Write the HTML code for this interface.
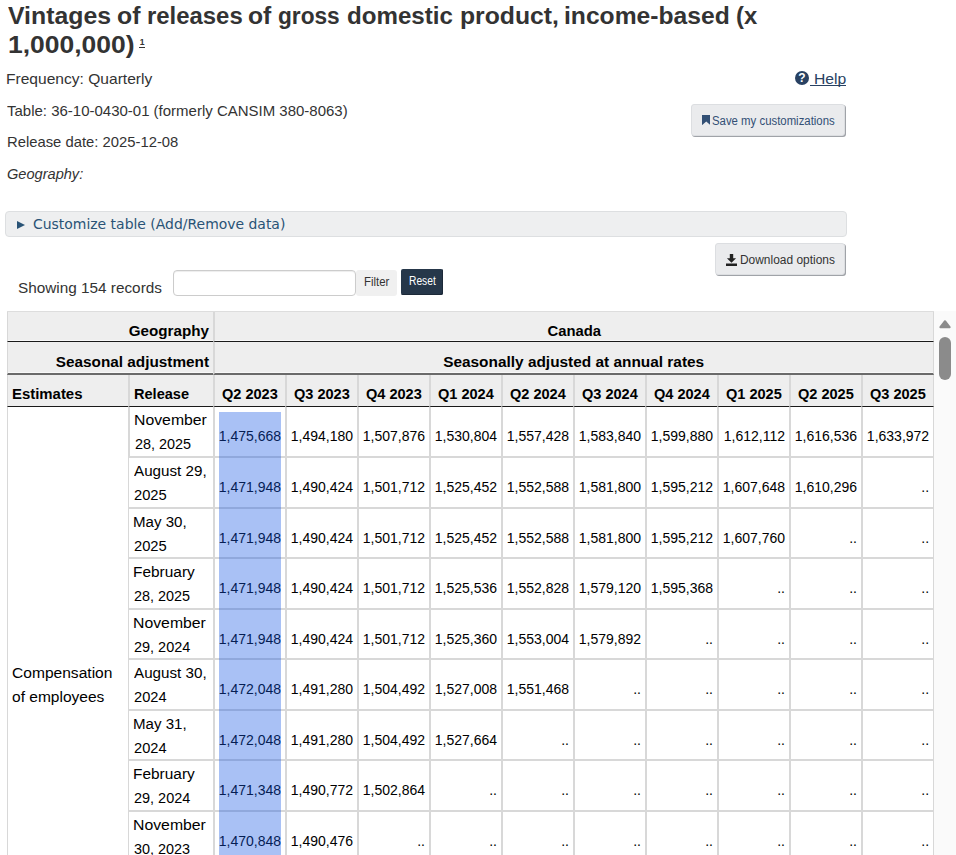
<!DOCTYPE html>
<html lang="en"><head><meta charset="utf-8"><title>Vintages of releases of gross domestic product, income-based</title>
<style>
*{box-sizing:border-box}
html,body{margin:0;padding:0;background:#fff}
body{width:956px;height:855px;overflow:hidden;position:relative;font-family:"Liberation Sans",sans-serif;font-size:15px;color:#333}
h1{margin:0;font-size:24.6px;font-weight:bold}
.tx{position:absolute;margin:0;white-space:nowrap;transform-origin:0 50%;height:20px;line-height:20px;display:block;text-decoration:none;text-align:left}
button{font:inherit;margin:0;padding:0;cursor:pointer;display:block;overflow:visible}
input{font:inherit;margin:0;padding:0 6px;outline:0;display:block}
summary{list-style:none;display:block;cursor:pointer}summary::-webkit-details-marker{display:none}
.fn a{color:inherit;text-decoration:none}
.help{cursor:pointer}
.fn{position:absolute;left:139px;top:36px;font-size:8.5px;line-height:12.400px;font-weight:bold;color:#333;border-bottom:1px solid #333;height:12px;padding:0 .7px}
.helpico{position:absolute;left:795px;top:70.9px;display:block}
.helpul{position:absolute;left:809.5px;top:85px;width:36px;height:1px;background:#284162}
.btn{position:absolute;background:#eaebed;border:1px solid #dcdee1;border-radius:3px;box-shadow:1px 1px .5px #a0a3a8}
.ico{position:absolute;display:block}
.cust{position:absolute;left:5px;top:211px;width:842px;height:26px;background:#eeeff0;border:1px solid #dddfe1;border-radius:4px}
.cust .tri{position:absolute;left:11px;top:8.500px;width:0;height:0;border-left:8px solid #295376;border-top:4.500px solid transparent;border-bottom:4.500px solid transparent}
.inp{position:absolute;left:173px;top:270px;width:183px;height:26px;border:1px solid #ccc;border-radius:4px;background:#fff;box-shadow:inset 0 1px 1px rgba(0,0,0,.075)}
.fbtn{position:absolute;left:356px;top:270px;width:41px;height:26px;background:#f0f0f0;border-radius:3px}
.reset{position:absolute;left:401px;top:269px;width:42px;height:26px;border:0;background:#26374a;border-radius:2px;box-shadow:inset -1px -1px 0 #1c2938}
.tw{position:absolute;left:7px;top:311px;width:927px;height:544px;overflow:hidden}
table.dt{border-collapse:separate;border-spacing:0;table-layout:fixed;width:927px;font-size:14px;color:#000;border-top:1px solid #ddd}
.dt th,.dt td{padding:0;border:0 solid #d8d8d8;border-left-width:2px;border-bottom-width:2px;overflow:hidden;white-space:nowrap;position:relative}
.dt tr>:first-child{border-left-width:1px}
.dt tr>:last-child{border-right-width:1px}
.dt thead th{background:#eee;font-weight:bold;border-bottom:1px solid #1a1a1a;vertical-align:top;line-height:20px}
.dt thead span{display:inline-block}
.dt .h1 th{height:30px;box-shadow:inset 0 -1px 0 #f8f8f8}
.dt .h2 th{height:33px;border-bottom:2px solid #6a6a6a;box-shadow:inset 0 -1px 0 #f8f8f8}
.dt .h3 th{height:32px}
.dt th.r{text-align:right;padding-right:4px}.dt th.r span{transform-origin:100% 50%}
.dt th.c{text-align:center}
.dt th.l{text-align:left;padding-left:3.500px}.dt th.l span{transform-origin:0 50%}
.dt .h1 span{position:relative;top:8.500px}
.dt .h2 span{position:relative;top:9.500px}
.dt .h3 span{position:relative;top:8.500px}
.dt tbody th{font-weight:normal;text-align:left;vertical-align:top;background:#fff}
.dt tbody th .ln{display:block;width:max-content;height:24px;line-height:24px;transform-origin:0 50%;position:relative;left:5.300px;top:.5px}
.dt tbody th.est{vertical-align:middle}
.dt tbody th.est .ln{left:4.500px;top:.5px}
.dt td{text-align:right;vertical-align:top;padding-right:4px}
.dt td span{display:inline-block;line-height:20px;transform-origin:100% 50%;position:relative;top:19.300px}
.selhl{position:absolute;left:212px;top:101px;width:62px;height:460px;background:rgba(17,84,227,.36)}
.sb{position:absolute;left:934px;top:311px;width:22px;height:544px;background:#fafafa}
.sb .arr{position:absolute;left:5px;top:8.500px;display:block}
.sb .thumb{position:absolute;left:5px;top:26px;width:12px;height:43px;border-radius:6px;background:#8b8b8b}

</style></head><body>
<h1><span class="tx" style="left:7.88px;top:5.73px;font-size:24.6px;color:#333;transform:scaleX(1.0091);font-weight:bold">Vintages</span> <span class="tx" style="left:116.73px;top:5.73px;font-size:24.6px;color:#333;transform:scaleX(1.0086);font-weight:bold">of</span> <span class="tx" style="left:146.65px;top:5.73px;font-size:24.6px;color:#333;transform:scaleX(0.9718);font-weight:bold">releases</span> <span class="tx" style="left:248.14px;top:5.73px;font-size:24.6px;color:#333;transform:scaleX(1.0042);font-weight:bold">of</span> <span class="tx" style="left:278.09px;top:5.73px;font-size:24.6px;color:#333;transform:scaleX(0.9214);font-weight:bold">gross</span> <span class="tx" style="left:346.79px;top:5.73px;font-size:24.6px;color:#333;transform:scaleX(0.9801);font-weight:bold">domestic</span> <span class="tx" style="left:459.79px;top:5.73px;font-size:24.6px;color:#333;transform:scaleX(1.0058);font-weight:bold">product,</span> <span class="tx" style="left:563.90px;top:5.73px;font-size:24.6px;color:#333;transform:scaleX(1.0019);font-weight:bold">income-based</span> <span class="tx" style="left:735.93px;top:5.73px;font-size:24.6px;color:#333;transform:scaleX(0.9702);font-weight:bold">(x</span> <span class="tx" style="left:7.91px;top:35.23px;font-size:24.6px;color:#333;transform:scaleX(1.0759);font-weight:bold">1,000,000)</span> <sup class="fn"><a>1</a></sup></h1>
<div class="meta">
<p class="tx" style="left:6.25px;top:68.55px;font-size:15px;color:#333;transform:scaleX(1.0380)">Frequency: Quarterly</p>
<p class="tx" style="left:7.20px;top:100.55px;font-size:15px;color:#333;transform:scaleX(0.9990)">Table: 36-10-0430-01 (formerly CANSIM 380-8063)</p>
<p class="tx" style="left:6.81px;top:131.80px;font-size:15px;color:#333;transform:scaleX(0.9875)">Release date: 2025-12-08</p>
<p class="tx" style="left:6.84px;top:164.05px;font-size:15px;color:#333;transform:scaleX(0.9722);font-style:italic">Geography:</p>
</div>
<div class="tools">
<a class="help"><svg class="helpico" width="14" height="14" viewBox="0 0 14 14"><circle cx="7" cy="7" r="7" fill="#284162"/><text x="7" y="11.300" font-size="12" font-weight="bold" text-anchor="middle" fill="#fff" font-family="Liberation Sans, sans-serif">?</text></svg><span class="tx" style="left:813.54px;top:68.60px;font-size:15px;color:#284162;transform:scaleX(1.0471)">Help</span><i class="helpul"></i></a>
<button type="button" class="btn" style="left:691px;top:104px;width:154px;height:32px"><svg class="ico" style="left:9.5px;top:10px" width="8.5" height="10.200" viewBox="0 0 8.5 10.200"><path d="M0 0h8.5v10.200l-4.250-3.700L0 10.200z" fill="#335075"/></svg><span class="tx" style="left:20.09px;top:5.54px;font-size:12px;color:#335075;transform:scaleX(0.9484)">Save my customizations</span></button>
</div>
<details class="cust"><summary><i class="tri"></i><span class="tx" style="left:27.13px;top:2.36px;font-size:14px;color:#295376;transform:scaleX(0.9959);font-family:'DejaVu Sans',sans-serif">Customize table (Add/Remove data)</span></summary></details>
<button type="button" class="btn" style="left:715px;top:243px;width:130px;height:32px"><svg class="ico" style="left:10px;top:10px" width="11" height="12" viewBox="0 0 11 12"><path d="M3.800 0h3.400v4.200h2.900L5.500 8.800 0.900 4.200h2.900zM0 9.500h11V12H0z" fill="#222"/></svg><span class="tx" style="left:23.75px;top:5.84px;font-size:12px;color:#333;transform:scaleX(0.9945)">Download options</span></button>
<div class="filterbar">
<span class="tx" style="left:17.61px;top:277.60px;font-size:15px;color:#333;transform:scaleX(1.0213)">Showing 154 records</span>
<input type="text" class="inp" aria-label="Filter">
<label class="fbtn"><span class="tx" style="left:8.19px;top:1.84px;font-size:12px;color:#333;transform:scaleX(0.9472)">Filter</span></label>
<button type="button" class="reset"><span class="tx" style="left:7.98px;top:2.34px;font-size:12px;color:#fff;transform:scaleX(0.8533)">Reset</span></button>
</div>
<div class="tw">
<table class="dt"><colgroup><col style="width:121px"><col style="width:85px"><col style="width:72px"><col style="width:72px"><col style="width:72px"><col style="width:72px"><col style="width:72px"><col style="width:72px"><col style="width:72px"><col style="width:72px"><col style="width:72px"><col style="width:73px"></colgroup>
<thead>
<tr class="h1"><th colspan="2" class="r"><span style="transform:scaleX(1.085)">Geography</span></th><th colspan="10" class="c"><span style="transform:scaleX(1.06)">Canada</span></th></tr>
<tr class="h2"><th colspan="2" class="r"><span style="transform:scaleX(1.094)">Seasonal adjustment</span></th><th colspan="10" class="c"><span style="transform:scaleX(1.1)">Seasonally adjusted at annual rates</span></th></tr>
<tr class="h3"><th class="l"><span style="transform:scaleX(1.065)">Estimates</span></th><th class="l"><span style="transform:scaleX(1.04)">Release</span></th><th class="c"><span style="transform:scaleX(1.04)">Q2 2023</span></th><th class="c"><span style="transform:scaleX(1.04)">Q3 2023</span></th><th class="c"><span style="transform:scaleX(1.04)">Q4 2023</span></th><th class="c"><span style="transform:scaleX(1.04)">Q1 2024</span></th><th class="c"><span style="transform:scaleX(1.04)">Q2 2024</span></th><th class="c"><span style="transform:scaleX(1.04)">Q3 2024</span></th><th class="c"><span style="transform:scaleX(1.04)">Q4 2024</span></th><th class="c"><span style="transform:scaleX(1.04)">Q1 2025</span></th><th class="c"><span style="transform:scaleX(1.04)">Q2 2025</span></th><th class="c"><span style="transform:scaleX(1.04)">Q3 2025</span></th></tr>
</thead><tbody>
<tr style="height:51px"><th rowspan="11" class="est"><span class="ln" style="transform:scaleX(1.1125);margin-left:-0.78px">Compensation</span><span class="ln" style="transform:scaleX(1.1092);margin-left:-0.62px">of employees</span></th><th class="rel"><span class="ln" style="transform:scaleX(1.1284);margin-left:-1.26px">November</span><span class="ln" style="transform:scaleX(1.0297);margin-left:-0.72px">28, 2025</span></th><td><span>1,475,668</span></td><td><span>1,494,180</span></td><td><span>1,507,876</span></td><td><span>1,530,804</span></td><td><span>1,557,428</span></td><td><span>1,583,840</span></td><td><span>1,599,880</span></td><td><span>1,612,112</span></td><td><span>1,616,536</span></td><td><span>1,633,972</span></td></tr>
<tr style="height:51px"><th class="rel"><span class="ln" style="transform:scaleX(1.0851);margin-left:0.00px">August 29,</span><span class="ln" style="transform:scaleX(1.0513);margin-left:-0.74px">2025</span></th><td><span>1,471,948</span></td><td><span>1,490,424</span></td><td><span>1,501,712</span></td><td><span>1,525,452</span></td><td><span>1,552,588</span></td><td><span>1,581,800</span></td><td><span>1,595,212</span></td><td><span>1,607,648</span></td><td><span>1,610,296</span></td><td><span>..</span></td></tr>
<tr style="height:50px"><th class="rel"><span class="ln" style="transform:scaleX(1.0769);margin-left:-1.21px">May 30,</span><span class="ln" style="transform:scaleX(1.0513);margin-left:-0.74px">2025</span></th><td><span>1,471,948</span></td><td><span>1,490,424</span></td><td><span>1,501,712</span></td><td><span>1,525,452</span></td><td><span>1,552,588</span></td><td><span>1,581,800</span></td><td><span>1,595,212</span></td><td><span>1,607,760</span></td><td><span>..</span></td><td><span>..</span></td></tr>
<tr style="height:51px"><th class="rel"><span class="ln" style="transform:scaleX(1.1020);margin-left:-1.23px">February</span><span class="ln" style="transform:scaleX(1.0297);margin-left:-0.72px">28, 2025</span></th><td><span>1,471,948</span></td><td><span>1,490,424</span></td><td><span>1,501,712</span></td><td><span>1,525,536</span></td><td><span>1,552,828</span></td><td><span>1,579,120</span></td><td><span>1,595,368</span></td><td><span>..</span></td><td><span>..</span></td><td><span>..</span></td></tr>
<tr style="height:50px"><th class="rel"><span class="ln" style="transform:scaleX(1.1284);margin-left:-1.26px">November</span><span class="ln" style="transform:scaleX(1.0331);margin-left:-0.72px">29, 2024</span></th><td><span>1,471,948</span></td><td><span>1,490,424</span></td><td><span>1,501,712</span></td><td><span>1,525,360</span></td><td><span>1,553,004</span></td><td><span>1,579,892</span></td><td><span>..</span></td><td><span>..</span></td><td><span>..</span></td><td><span>..</span></td></tr>
<tr style="height:51px"><th class="rel"><span class="ln" style="transform:scaleX(1.0851);margin-left:0.00px">August 30,</span><span class="ln" style="transform:scaleX(1.0439);margin-left:-0.73px">2024</span></th><td><span>1,472,048</span></td><td><span>1,491,280</span></td><td><span>1,504,492</span></td><td><span>1,527,008</span></td><td><span>1,551,468</span></td><td><span>..</span></td><td><span>..</span></td><td><span>..</span></td><td><span>..</span></td><td><span>..</span></td></tr>
<tr style="height:50px"><th class="rel"><span class="ln" style="transform:scaleX(1.0769);margin-left:-1.21px">May 31,</span><span class="ln" style="transform:scaleX(1.0439);margin-left:-0.73px">2024</span></th><td><span>1,472,048</span></td><td><span>1,491,280</span></td><td><span>1,504,492</span></td><td><span>1,527,664</span></td><td><span>..</span></td><td><span>..</span></td><td><span>..</span></td><td><span>..</span></td><td><span>..</span></td><td><span>..</span></td></tr>
<tr style="height:51px"><th class="rel"><span class="ln" style="transform:scaleX(1.1020);margin-left:-1.23px">February</span><span class="ln" style="transform:scaleX(1.0331);margin-left:-0.72px">29, 2024</span></th><td><span>1,471,348</span></td><td><span>1,490,772</span></td><td><span>1,502,864</span></td><td><span>..</span></td><td><span>..</span></td><td><span>..</span></td><td><span>..</span></td><td><span>..</span></td><td><span>..</span></td><td><span>..</span></td></tr>
<tr style="height:50px"><th class="rel"><span class="ln" style="transform:scaleX(1.1284);margin-left:-1.26px">November</span><span class="ln" style="transform:scaleX(1.0294);margin-left:-0.50px">30, 2023</span></th><td><span>1,470,848</span></td><td><span>1,490,476</span></td><td><span>..</span></td><td><span>..</span></td><td><span>..</span></td><td><span>..</span></td><td><span>..</span></td><td><span>..</span></td><td><span>..</span></td><td><span>..</span></td></tr>
<tr style="height:51px"><th class="rel"><span class="ln" style="transform:scaleX(1.0851);margin-left:0.00px">August 31,</span><span class="ln" style="transform:scaleX(1.0513);margin-left:-0.74px">2023</span></th><td><span>1,470,848</span></td><td><span>..</span></td><td><span>..</span></td><td><span>..</span></td><td><span>..</span></td><td><span>..</span></td><td><span>..</span></td><td><span>..</span></td><td><span>..</span></td><td><span>..</span></td></tr>
<tr style="height:50px"><th class="rel"><span class="ln" style="transform:scaleX(1.0769);margin-left:-1.21px">May 31,</span><span class="ln" style="transform:scaleX(1.0513);margin-left:-0.74px">2023</span></th><td><span>..</span></td><td><span>..</span></td><td><span>..</span></td><td><span>..</span></td><td><span>..</span></td><td><span>..</span></td><td><span>..</span></td><td><span>..</span></td><td><span>..</span></td><td><span>..</span></td></tr>
</tbody></table>
<div class="selhl"></div>
</div>
<div class="sb"><svg class="arr" width="12" height="9" viewBox="0 0 12 9"><path d="M6 1.200L10.600 7.200H1.400z" fill="#8b8b8b" stroke="#8b8b8b" stroke-width="2" stroke-linejoin="round"/></svg><div class="thumb"></div></div>
</body></html>
